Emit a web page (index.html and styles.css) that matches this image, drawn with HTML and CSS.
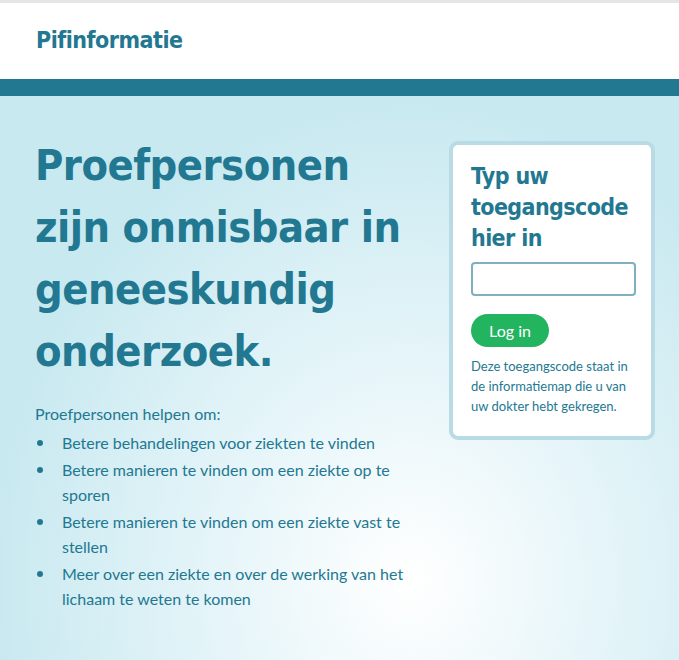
FILE: index.html
```html
<!DOCTYPE html>
<html lang="nl">
<head>
<meta charset="utf-8">
<title>Pifinformatie</title>
<link rel="stylesheet" href="styles.css">
</head>
<body>
<header class="site-header">
  <div class="brand">Pifinformatie</div>
</header>
<div class="band"></div>
<main class="main">
  <section class="intro">
    <h1 class="headline">Proefpersonen zijn onmisbaar in geneeskundig onderzoek.</h1>
    <p class="lead">Proefpersonen helpen om:</p>
    <ul class="points">
      <li>Betere behandelingen voor ziekten te vinden</li>
      <li>Betere manieren te vinden om een ziekte op te sporen</li>
      <li>Betere manieren te vinden om een ziekte vast te stellen</li>
      <li>Meer over een ziekte en over de werking van het lichaam te weten te komen</li>
    </ul>
  </section>
  <aside class="login">
    <h2 class="login-title">Typ uw toegangscode hier in</h2>
    <input class="code-input" type="text" aria-label="Toegangscode">
    <button class="btn-login" type="button">Log in</button>
    <p class="login-note">Deze toegangscode staat in de informatiemap die u van uw dokter hebt gekregen.</p>
  </aside>
</main>
</body>
</html>
```

FILE: styles.css
```css
html, body {
  margin: 0;
  padding: 0;
  height: 100%;
}
body {
  font-family: Lato, "Open Sans", sans-serif;
  color: #237891;
  background: radial-gradient(ellipse 420px 480px at 410px 580px, #ffffff 0%, #e6f5f9 45%, #c8e9f0 100%);
  background-color: #c8e9f0;
  min-height: 660px;
}
.site-header {
  background: #fff;
  border-top: 3px solid #e4e6e7;
  height: 76px;
  display: flex;
  align-items: center;
  padding-left: 36px;
}
.brand {
  font-family: "DejaVu Sans Condensed", "DejaVu Sans", sans-serif;
  font-stretch: condensed;
  font-weight: bold;
  font-size: 23px;
  letter-spacing: -0.5px;
  color: #237891;
  margin-top: -2px;
}
.band {
  height: 17px;
  background: #237891;
}
.main {
  display: flex;
  justify-content: space-between;
  align-items: flex-start;
  padding: 45px 24px 0 35px;
}
.intro {
  width: 385px;
}
.headline {
  font-family: "DejaVu Sans Condensed", "DejaVu Sans", sans-serif;
  font-stretch: condensed;
  font-weight: bold;
  font-size: 43px;
  line-height: 62px;
  letter-spacing: -0.5px;
  margin: -7px 0 0 0;
  color: #237891;
}
.lead {
  font-size: 16px;
  line-height: 25px;
  margin: 19px 0 4px 0;
}
.points {
  list-style: none;
  margin: 0;
  padding: 0;
  font-size: 16px;
  line-height: 25px;
}
.points li {
  display: grid;
  grid-template-columns: 27px 1fr;
  margin-bottom: 2px;
}
.points li::before {
  content: "";
  width: 6px;
  height: 6px;
  border-radius: 50%;
  background: #237891;
  margin: 10px 0 0 2px;
}
.login {
  width: 206px;
  box-sizing: border-box;
  background: #fff;
  border: 4px solid #b8dbe5;
  border-radius: 9px;
  padding: 16px 18px 20px 18px;
}
.login-title {
  font-family: "DejaVu Sans Condensed", "DejaVu Sans", sans-serif;
  font-stretch: condensed;
  font-weight: bold;
  font-size: 23px;
  line-height: 31px;
  letter-spacing: -0.6px;
  margin: 0 0 8px 0;
  color: #237891;
}
.code-input {
  display: block;
  width: 165px;
  height: 34px;
  box-sizing: border-box;
  border: 2px solid #7eb0c0;
  border-radius: 4px;
  margin: 0 0 18px 0;
  padding: 0 8px;
  font-size: 16px;
}
.btn-login {
  display: block;
  background: #23b45f;
  color: #fff;
  border: 0;
  border-radius: 17px;
  width: 78px;
  height: 33px;
  font-family: Lato, "Open Sans", sans-serif;
  font-size: 16px;
  padding: 0;
  margin: 0 0 9px 0;
}
.login-note {
  font-size: 13px;
  line-height: 20px;
  margin: 0;
}
```
